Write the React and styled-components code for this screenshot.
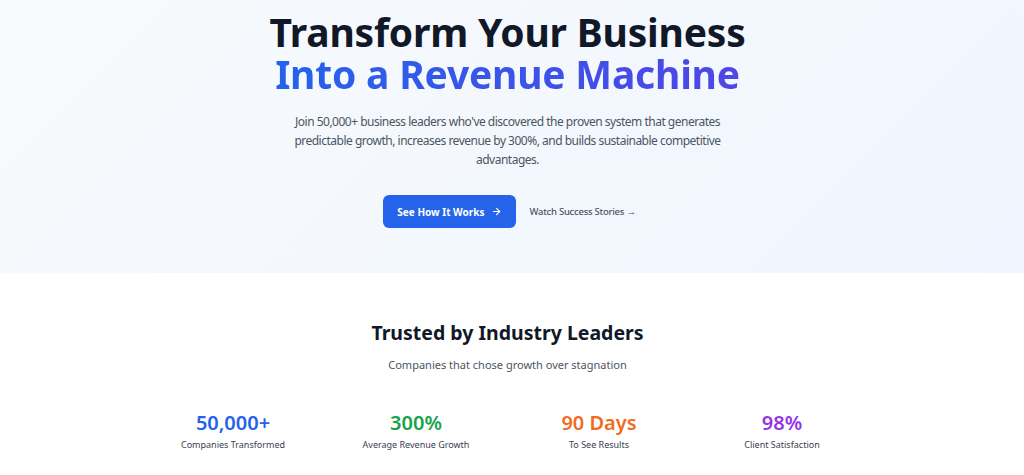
import React from 'react'
import styled, { createGlobalStyle } from 'styled-components'

const GlobalStyle = createGlobalStyle`
    * { box-sizing: border-box; }
    body {
        margin: 0;
        font-family: "Noto Sans", "Open Sans", sans-serif;
        background: #ffffff;
        color: #111827;
    }
`

const Hero = styled.section`
    background: linear-gradient(135deg, #f8fafc 0%, #eff6ff 100%);
    height: 273px;
    display: flex;
    flex-direction: column;
    align-items: center;
    padding: 11px 9px 0 0;
    text-align: center;
`

const Title = styled.h1`
    margin: 0;
    font-size: 39px;
    line-height: 42px;
    font-weight: 700;
    color: #111827;
    letter-spacing: -0.2px;
`

const Accent = styled.span`
    display: inline-block;
    background: linear-gradient(90deg, #2563eb, #4f46e5);
    -webkit-background-clip: text;
    background-clip: text;
    color: transparent;
`

const Lead = styled.p`
    margin: 17px 0 0;
    max-width: 440px;
    font-size: 12px;
    line-height: 19px;
    letter-spacing: -0.5px;
    color: #4b5563;
`

const Actions = styled.div`
    display: flex;
    align-items: center;
    gap: 14px;
    margin-top: 26px;
    padding-left: 4px;
`

const PrimaryButton = styled.button`
    display: flex;
    align-items: center;
    gap: 6px;
    height: 33px;
    padding: 0 14px;
    border: none;
    border-radius: 6px;
    background: #2563eb;
    color: #fff;
    font-family: inherit;
    font-size: 10px;
    font-weight: 700;
    cursor: pointer;
`

const TextLink = styled.a`
    font-size: 9.5px;
    font-weight: 500;
    letter-spacing: -0.25px;
    color: #4b5563;
    text-decoration: none;
`

const Trusted = styled.section`
    display: flex;
    flex-direction: column;
    align-items: center;
    padding: 46px 9px 0 0;
    text-align: center;
`

const SectionTitle = styled.h2`
    margin: 0;
    font-size: 19.5px;
    line-height: 28px;
    font-weight: 700;
    color: #111827;
`

const SectionSub = styled.p`
    margin: 10px 0 0;
    font-size: 11px;
    color: #4b5563;
`

const StatGrid = styled.div`
    display: grid;
    grid-template-columns: repeat(4, 1fr);
    width: 732px;
    margin-top: 38px;
`

const Stat = styled.div`
    display: flex;
    flex-direction: column;
    align-items: center;
`

const StatValue = styled.div`
    font-size: 20px;
    line-height: 26px;
    font-weight: 600;
    color: ${ ( { tone } ) => tone };
`

const StatLabel = styled.div`
    margin-top: 2px;
    font-size: 9px;
    color: #374151;
`

const Arrow = () => (
    <svg width="11" height="11" viewBox="0 0 24 24" fill="none" stroke="currentColor" strokeWidth="2.4" strokeLinecap="round" strokeLinejoin="round">
        <path d="M5 12h14" />
        <path d="m12 5 7 7-7 7" />
    </svg>
)

const stats = [
    { value: '50,000+', label: 'Companies Transformed', tone: '#2563eb' },
    { value: '300%', label: 'Average Revenue Growth', tone: '#16a34a' },
    { value: '90 Days', label: 'To See Results', tone: '#f26b1d' },
    { value: '98%', label: 'Client Satisfaction', tone: '#9333ea' },
]

export default function App() {
    return (
        <>
            <GlobalStyle />
            <Hero>
                <Title>
                    Transform Your Business<br />
                    <Accent>Into a Revenue Machine</Accent>
                </Title>
                <Lead>
                    Join 50,000+ business leaders who've discovered the proven system that generates
                    predictable growth, increases revenue by 300%, and builds sustainable competitive advantages.
                </Lead>
                <Actions>
                    <PrimaryButton>See How It Works <Arrow /></PrimaryButton>
                    <TextLink href="#">Watch Success Stories →</TextLink>
                </Actions>
            </Hero>
            <Trusted>
                <SectionTitle>Trusted by Industry Leaders</SectionTitle>
                <SectionSub>Companies that chose growth over stagnation</SectionSub>
                <StatGrid>
                    { stats.map( s => (
                        <Stat key={ s.label }>
                            <StatValue tone={ s.tone }>{ s.value }</StatValue>
                            <StatLabel>{ s.label }</StatLabel>
                        </Stat>
                    ) ) }
                </StatGrid>
            </Trusted>
        </>
    )
}
